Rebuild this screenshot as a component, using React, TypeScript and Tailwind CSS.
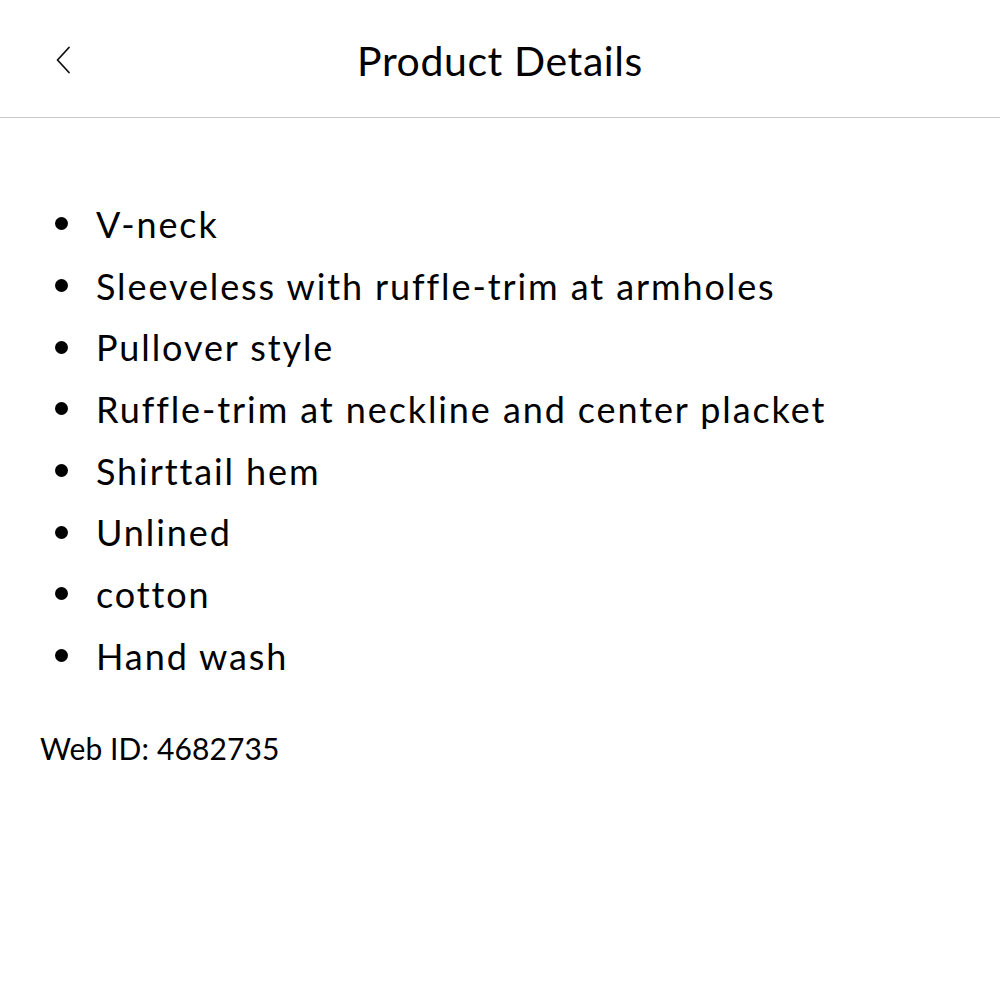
import React from 'react';

const details = [
    'V-neck',
    'Sleeveless with ruffle-trim at armholes',
    'Pullover style',
    'Ruffle-trim at neckline and center placket',
    'Shirttail hem',
    'Unlined',
    'cotton',
    'Hand wash',
];

const App: React.FC = () => {
    return (
        <div className="w-[1000px] h-[1000px] bg-white text-black font-['Lato',sans-serif]">
            {/* Header */}
            <header className="relative h-[118px] border-b border-[#c8c8c8] flex items-center justify-center">
                <button className="absolute left-[54px] top-[45px] w-[18px] h-[30px] flex items-center justify-center">
                    <svg width="16" height="28" viewBox="0 0 16 28" fill="none">
                        <path d="M14 1.5 L2.5 14 L14 26.5" stroke="#111" strokeWidth="1.8" strokeLinecap="round" strokeLinejoin="round" />
                    </svg>
                </button>
                <h1 className="text-[41px] font-normal tracking-[0.6px] mt-[4px]">Product Details</h1>
            </header>

            {/* Details list */}
            <ul className="pt-[75px] pl-[55px] flex flex-col">
                {details.map((item) => (
                    <li key={item} className="flex items-center h-[61.7px]">
                        <span className="w-[13px] h-[13px] rounded-full bg-black shrink-0" />
                        <span className="ml-[28px] text-[36px] tracking-[1.9px]">{item}</span>
                    </li>
                ))}
            </ul>

            <p className="mt-[39px] pl-[40px] text-[30px] tracking-[0.1px]">Web ID: 4682735</p>
        </div>
    );
};

export default App;
